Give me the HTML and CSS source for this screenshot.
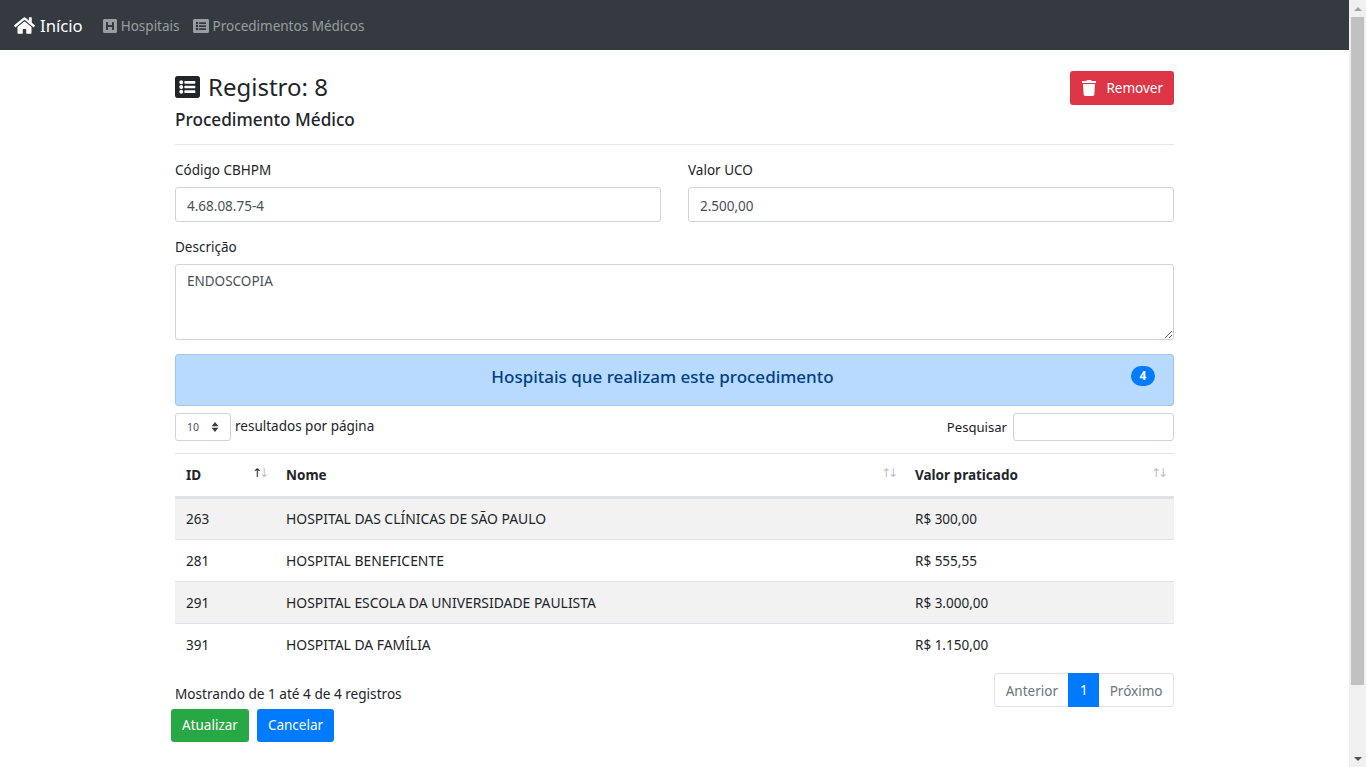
FILE: index.html
```html
<!DOCTYPE html>
<html lang="en">
<head>
  <meta charset="UTF-8">
  <meta name="viewport" content="width=device-width, initial-scale=1.0">
  <title>Procedimento Médico</title>
  <link rel="stylesheet" href="styles.css">
</head>
<body>

<nav class="navbar">
  <a class="brand" href="#">
    <svg class="icon-home" xmlns="http://www.w3.org/2000/svg" viewBox="0 0 576 512" fill="currentColor"><path d="M280.37 148.26L96 300.11V464a16 16 0 0 0 16 16l112.06-.29a16 16 0 0 0 15.92-16V368a16 16 0 0 1 16-16h64a16 16 0 0 1 16 16v95.64a16 16 0 0 0 16 16.05L464 480a16 16 0 0 0 16-16V300L295.67 148.26a12.19 12.19 0 0 0-15.3 0zM571.6 251.47L488 182.56V44.05a12 12 0 0 0-12-12h-56a12 12 0 0 0-12 12v72.61L318.47 43a48 48 0 0 0-61 0L4.34 251.47a12 12 0 0 0-1.6 16.9l25.5 31A12 12 0 0 0 45.15 301l235.22-193.74a12.19 12.19 0 0 1 15.3 0L530.9 301a12 12 0 0 0 16.9-1.6l25.5-31a12 12 0 0 0-1.7-16.93z"/></svg>
    Início
  </a>
  <a class="nav-link" href="#">
    <svg class="icon-nav" xmlns="http://www.w3.org/2000/svg" viewBox="0 0 448 512" fill="currentColor"><path d="M448 80v352c0 26.51-21.49 48-48 48H48c-26.51 0-48-21.49-48-48V80c0-26.51 21.49-48 48-48h352c26.51 0 48 21.49 48 48zm-112 48h-32c-8.837 0-16 7.163-16 16v80H160v-80c0-8.837-7.163-16-16-16h-32c-8.837 0-16 7.163-16 16v224c0 8.837 7.163 16 16 16h32c8.837 0 16-7.163 16-16v-80h128v80c0 8.837 7.163 16 16 16h32c8.837 0 16-7.163 16-16V144c0-8.837-7.163-16-16-16z"/></svg>
    Hospitais
  </a>
  <a class="nav-link" href="#">
    <svg class="icon-nav icon-list" xmlns="http://www.w3.org/2000/svg" viewBox="0 0 512 512" fill="currentColor"><path d="M464 480H48c-26.51 0-48-21.49-48-48V80c0-26.51 21.49-48 48-48h416c26.51 0 48 21.49 48 48v352c0 26.51-21.49 48-48 48zM128 120c-22.091 0-40 17.909-40 40s17.909 40 40 40 40-17.909 40-40-17.909-40-40-40zm0 96c-22.091 0-40 17.909-40 40s17.909 40 40 40 40-17.909 40-40-17.909-40-40-40zm0 96c-22.091 0-40 17.909-40 40s17.909 40 40 40 40-17.909 40-40-17.909-40-40-40zm288-136v-32c0-6.627-5.373-12-12-12H204c-6.627 0-12 5.373-12 12v32c0 6.627 5.373 12 12 12h200c6.627 0 12-5.373 12-12zm0 96v-32c0-6.627-5.373-12-12-12H204c-6.627 0-12 5.373-12 12v32c0 6.627 5.373 12 12 12h200c6.627 0 12-5.373 12-12zm0 96v-32c0-6.627-5.373-12-12-12H204c-6.627 0-12 5.373-12 12v32c0 6.627 5.373 12 12 12h200c6.627 0 12-5.373 12-12z"/></svg>
    Procedimentos Médicos
  </a>
</nav>

<main class="content">
  <div class="page-head">
    <div>
      <h1 class="page-title">
        <svg class="icon-title" xmlns="http://www.w3.org/2000/svg" viewBox="0 0 512 512" fill="currentColor"><path d="M464 480H48c-26.51 0-48-21.49-48-48V80c0-26.51 21.49-48 48-48h416c26.51 0 48 21.49 48 48v352c0 26.51-21.49 48-48 48zM128 120c-22.091 0-40 17.909-40 40s17.909 40 40 40 40-17.909 40-40-17.909-40-40-40zm0 96c-22.091 0-40 17.909-40 40s17.909 40 40 40 40-17.909 40-40-17.909-40-40-40zm0 96c-22.091 0-40 17.909-40 40s17.909 40 40 40 40-17.909 40-40-17.909-40-40-40zm288-136v-32c0-6.627-5.373-12-12-12H204c-6.627 0-12 5.373-12 12v32c0 6.627 5.373 12 12 12h200c6.627 0 12-5.373 12-12zm0 96v-32c0-6.627-5.373-12-12-12H204c-6.627 0-12 5.373-12 12v32c0 6.627 5.373 12 12 12h200c6.627 0 12-5.373 12-12zm0 96v-32c0-6.627-5.373-12-12-12H204c-6.627 0-12 5.373-12 12v32c0 6.627 5.373 12 12 12h200c6.627 0 12-5.373 12-12z"/></svg>
        Registro: 8
      </h1>
      <h2 class="page-subtitle">Procedimento Médico</h2>
    </div>
    <button class="btn btn-danger btn-remove">
      <svg class="icon-trash" xmlns="http://www.w3.org/2000/svg" viewBox="0 0 448 512" fill="currentColor"><path d="M432 32H312l-9.4-18.7A24 24 0 0 0 281.1 0H166.8a23.72 23.72 0 0 0-21.4 13.3L136 32H16A16 16 0 0 0 0 48v32a16 16 0 0 0 16 16h416a16 16 0 0 0 16-16V48a16 16 0 0 0-16-16zM53.2 467a48 48 0 0 0 47.9 45h245.8a48 48 0 0 0 47.9-45L416 128H32z"/></svg>
      Remover
    </button>
  </div>

  <hr class="divider">

  <div class="form-row">
    <div class="form-group">
      <label for="codigo">Código CBHPM</label>
      <input class="form-control" id="codigo" type="text" value="4.68.08.75-4">
    </div>
    <div class="form-group">
      <label for="valor">Valor UCO</label>
      <input class="form-control" id="valor" type="text" value="2.500,00">
    </div>
  </div>

  <label for="descricao">Descrição</label>
  <textarea class="form-control form-textarea" id="descricao">ENDOSCOPIA</textarea>

  <div class="alert-head">
    <span>Hospitais que realizam este procedimento</span>
    <span class="badge">4</span>
  </div>

  <div class="table-tools">
    <div class="length">
      <div class="select-sm">10
        <svg class="select-arrows" xmlns="http://www.w3.org/2000/svg" viewBox="0 0 8 12" fill="#343a40"><path d="M4 0L8 5H0zM4 12L0 7h8z"/></svg>
      </div>
      <span class="length-text">resultados por página</span>
    </div>
    <div class="search">
      <label for="pesquisar">Pesquisar</label>
      <input class="search-input" id="pesquisar" type="text">
    </div>
  </div>

  <table class="data-table">
    <thead>
      <tr>
        <th class="col-id">ID<span class="sort"><b class="on">↑</b><b>↓</b></span></th>
        <th class="col-name">Nome<span class="sort"><b>↑</b><b>↓</b></span></th>
        <th>Valor praticado<span class="sort"><b>↑</b><b>↓</b></span></th>
      </tr>
    </thead>
    <tbody>
      <tr><td>263</td><td class="name">HOSPITAL DAS CLÍNICAS DE SÃO PAULO</td><td>R$ 300,00</td></tr>
      <tr><td>281</td><td class="name">HOSPITAL BENEFICENTE</td><td>R$ 555,55</td></tr>
      <tr><td>291</td><td class="name">HOSPITAL ESCOLA DA UNIVERSIDADE PAULISTA</td><td>R$ 3.000,00</td></tr>
      <tr><td>391</td><td class="name">HOSPITAL DA FAMÍLIA</td><td>R$ 1.150,00</td></tr>
    </tbody>
  </table>

  <div class="table-foot">
    <div class="info">Mostrando de 1 até 4 de 4 registros</div>
    <ul class="pagination">
      <li>Anterior</li>
      <li class="active">1</li>
      <li>Próximo</li>
    </ul>
  </div>

  <div class="actions">
    <button class="btn btn-success">Atualizar</button>
    <button class="btn btn-primary">Cancelar</button>
  </div>
</main>

<div class="scrollbar">
  <svg class="scroll-arrow" xmlns="http://www.w3.org/2000/svg" viewBox="0 0 8 4" fill="#a3a3a3"><path d="M4 0l4 4H0z"/></svg>
  <div class="scroll-thumb"></div>
  <svg class="scroll-arrow scroll-arrow-down" xmlns="http://www.w3.org/2000/svg" viewBox="0 0 8 4" fill="#505050"><path d="M0 0h8L4 4z"/></svg>
</div>

</body>
</html>
```

FILE: styles.css
```css
* {
  box-sizing: border-box;
}
html, body {
  height: 767px;
  overflow: hidden;
}
body {
  margin: 0;
  padding-right: 17px;
  font-family: "Noto Sans", "Open Sans", sans-serif;
  font-size: 13.5px;
  line-height: 21px;
  color: #212529;
  background-color: #fff;
}

/* navbar */
.navbar {
  display: flex;
  align-items: center;
  height: 50px;
  padding: 0 14px;
  background-color: #343a40;
}
.navbar a {
  display: flex;
  align-items: center;
  text-decoration: none;
}
.brand {
  gap: 5px;
  margin-right: 20px;
  font-size: 16.7px;
  color: #fff;
}
.nav-link {
  gap: 4px;
  margin-right: 13px;
  padding-top: 2px;
  color: rgba(255, 255, 255, 0.5);
}
.icon-home {
  width: 21px;
  height: 19px;
}
.icon-nav {
  width: 14px;
  height: 16px;
}
.icon-nav.icon-list {
  width: 16px;
}

/* head */
.content {
  width: 999px;
  margin: 0 auto;
}
.page-head {
  display: flex;
  justify-content: space-between;
  align-items: flex-start;
  padding-top: 21px;
}
.page-title {
  display: flex;
  align-items: center;
  gap: 8px;
  margin: -1px 0 0;
  font-size: 24px;
  line-height: 34px;
  font-weight: 400;
}
.icon-title {
  width: 25px;
  height: 28px;
}
.page-subtitle {
  margin: 4px 0 0;
  font-size: 17.2px;
  line-height: 24px;
  font-weight: 500;
}
.divider {
  margin: 12px 0 15px;
  border: 0;
  border-top: 1px solid #e5e6e8;
}

/* buttons */
.btn {
  height: 33px;
  padding: 0 11px;
  border: 0;
  border-radius: 3px;
  font-family: inherit;
  font-size: 13.5px;
  color: #fff;
}
.btn-remove {
  display: flex;
  align-items: center;
  gap: 10px;
  height: 34px;
  padding-left: 12px;
}
.icon-trash {
  width: 14px;
  height: 16px;
}
.btn-danger {
  background-color: #dc3545;
}
.btn-success {
  background-color: #28a745;
}
.btn-primary {
  background-color: #007bff;
}

/* form */
label {
  display: block;
}
.form-row {
  display: flex;
  gap: 27px;
}
.form-group {
  flex: 1;
  margin-bottom: 15px;
}
.form-group label,
.content > label {
  margin-bottom: 6px;
}
.form-control {
  display: block;
  width: 100%;
  height: 35px;
  padding: 2px 11px 0;
  border: 1px solid #ced4da;
  border-radius: 3px;
  font-family: inherit;
  font-size: 13.5px;
  color: #495057;
}
.form-textarea {
  height: 76px;
  padding-top: 6px;
  line-height: 21px;
}

/* panel title */
.alert-head {
  position: relative;
  display: flex;
  justify-content: center;
  align-items: center;
  height: 52px;
  margin-top: 14px;
  padding: 0 24px 8px 0;
  border: 1px solid #9fc5ea;
  border-radius: 3px;
  font-size: 17px;
  font-weight: 500;
  color: #004085;
  background-color: #b8daff;
}
.badge {
  position: absolute;
  top: 11px;
  right: 18px;
  width: 24px;
  height: 20px;
  border-radius: 10px;
  font-size: 12px;
  line-height: 20px;
  font-weight: 700;
  text-align: center;
  color: #fff;
  background-color: #007bff;
}

/* datatable */
.table-tools {
  display: flex;
  justify-content: space-between;
  align-items: center;
  height: 28px;
  margin-top: 7px;
}
.length, .search {
  display: flex;
  align-items: center;
  gap: 4px;
}
.search {
  gap: 6px;
  font-size: 13.1px;
}
.length-text {
  margin-bottom: 2px;
}
.select-sm {
  display: flex;
  align-items: center;
  justify-content: space-between;
  width: 56px;
  height: 28px;
  padding: 0 11px;
  border: 1px solid #ced4da;
  border-radius: 3px;
  font-size: 10.5px;
  color: #495057;
}
.select-arrows {
  width: 8px;
  height: 10px;
}
.search-input {
  width: 161px;
  height: 28px;
  border: 1px solid #ced4da;
  border-radius: 3px;
}
.data-table {
  width: 100%;
  margin-top: 12px;
  border-collapse: collapse;
  table-layout: fixed;
}
.data-table th,
.data-table td {
  height: 42px;
  padding: 2px 11px 0;
  border-top: 1px solid #dee2e6;
  text-align: left;
}
.data-table th {
  position: relative;
  height: 44px;
  padding-top: 1px;
  border-bottom: 3px solid #dee2e6;
  font-weight: 700;
}
.data-table td.name {
  padding-top: 0;
  font-size: 13.9px;
}
.data-table tbody tr:first-child td {
  padding-top: 0;
  border-top: 0;
}
.data-table tbody tr:first-child td.name {
  padding-bottom: 2px;
}
.data-table tbody tr:nth-child(odd) {
  background-color: #f2f2f2;
}
.col-id {
  width: 100px;
}
.col-name {
  width: 629px;
}
.sort {
  position: absolute;
  top: 9px;
  right: 6px;
  padding-right: 3px;
  font-family: "DejaVu Sans", sans-serif;
  font-size: 12px;
  line-height: 20px;
  letter-spacing: -3px;
}
.sort b {
  font-weight: 400;
  opacity: 0.3;
}
.sort b.on {
  opacity: 1;
}
.table-foot {
  display: flex;
  justify-content: space-between;
  align-items: flex-start;
  margin-top: 7px;
}
.info {
  padding-top: 10px;
  font-size: 13.6px;
}
.pagination {
  display: flex;
  margin: 0;
  padding: 0;
  list-style: none;
  border: 1px solid #dee2e6;
  border-radius: 3px;
  color: #6c757d;
}
.pagination li {
  height: 32px;
  padding: 0 10.5px;
  line-height: 34px;
}
.pagination .active {
  margin: -1px 0;
  padding: 0 11.5px;
  height: 34px;
  color: #fff;
  background-color: #007bff;
}
.actions {
  display: flex;
  gap: 8px;
  margin: 2px 0 0 -4px;
}

/* window scrollbar, drawn over the page */
.scrollbar {
  position: fixed;
  top: 0;
  right: 0;
  bottom: 0;
  width: 17px;
  display: flex;
  flex-direction: column;
  align-items: center;
  background-color: #f0f0f0;
}
.scroll-arrow {
  flex: none;
  width: 8px;
  height: 4px;
  margin: 7px 0 6px;
}
.scroll-thumb {
  flex: none;
  width: 13px;
  height: 668px;
  background-color: #c1c1c1;
}
.scroll-arrow-down {
  margin: auto 0 6px;
}
```
